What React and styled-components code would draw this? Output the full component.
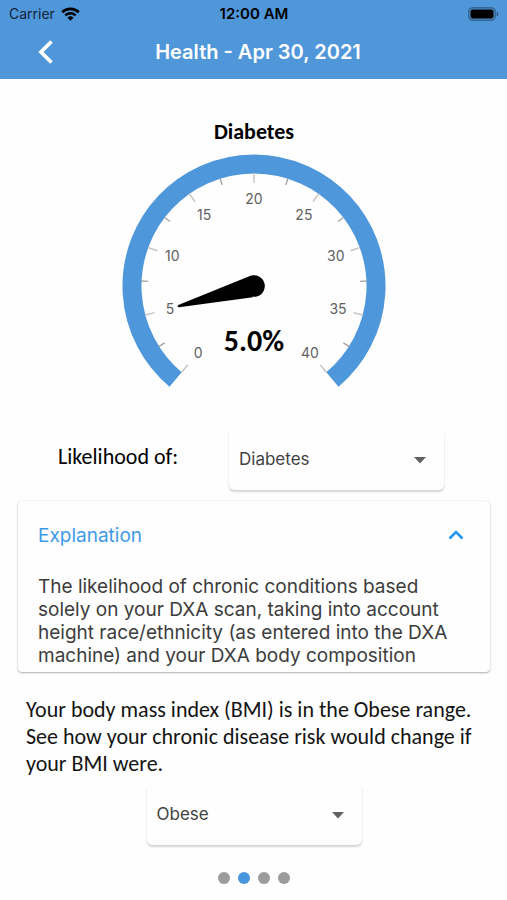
import { useState } from "react";
import styled, { createGlobalStyle } from "styled-components";

const GlobalStyle = createGlobalStyle`
	* {
		box-sizing: border-box;
	}

	body {
		margin: 0;
		background-color: #fefefe;
		font-family: Inter, "Liberation Sans", sans-serif;
		color: #000;
	}
`;

const humanist = `Carlito, Lato, "Open Sans", sans-serif`;

const Container = styled.div`
	display: flex;
	flex-direction: column;
	min-height: 100vh;
`;

const Header = styled.header`
	background-color: #5097da;
`;

const StatusBar = styled.div`
	display: grid;
	grid-template-columns: 1fr auto 1fr;
	align-items: center;
	height: 27px;
	padding: 0 8px 0 9px;
	font-size: 14px;
`;

const Carrier = styled.div`
	display: flex;
	align-items: center;
	gap: 6px;
	color: #10243a;
`;

const Time = styled.div`
	font-size: 15px;
	font-weight: 600;
`;

const Battery = styled.svg`
	justify-self: end;
`;

const NavBar = styled.div`
	display: grid;
	grid-template-columns: 1fr auto 1fr;
	align-items: center;
	height: 52px;
	padding: 0 0 2px 9px;
`;

const BackButton = styled.button`
	display: flex;
	justify-self: start;
	margin-left: 24px;
	padding: 4px;
	border: none;
	background: none;
	cursor: pointer;
`;

const PageTitle = styled.h1`
	margin: 0;
	font-size: 20px;
	font-weight: 600;
	color: white;
`;

const Main = styled.main`
	display: flex;
	flex-direction: column;
	padding: 40px 17px 16px 18px;
`;

const GaugeTitle = styled.h2`
	margin: 0 0 9px;
	font-family: ${humanist};
	font-size: 22px;
	line-height: 26px;
	font-weight: 700;
	text-align: center;
`;

const GaugeChart = styled.svg`
	display: block;
	align-self: center;
`;

const GaugeLabel = styled.text`
	font-size: 14px;
	fill: #616161;
	text-anchor: middle;
`;

const GaugeValue = styled.text`
	font-family: ${humanist};
	font-size: 30px;
	font-weight: 700;
	text-anchor: middle;
`;

const LikelihoodRow = styled.div`
	display: flex;
	justify-content: space-between;
	align-items: flex-start;
	margin-top: 32px;
	padding: 0 46px 0 40px;
`;

const LikelihoodLabel = styled.label`
	padding-top: 12px;
	font-family: ${humanist};
	font-size: 22px;
	line-height: 26px;
`;

const SelectWrapper = styled.div`
	position: relative;
	width: 215px;
`;

const Select = styled.select`
	appearance: none;
	display: block;
	width: 100%;
	height: 58px;
	padding: 0 48px 4px 10px;
	border: none;
	border-radius: 0 0 5px 5px;
	background-color: #fefefe;
	box-shadow: 0 2px 2px rgba(0, 0, 0, 0.16), 0 0 1px rgba(0, 0, 0, 0.14);
	font-family: inherit;
	font-size: 17px;
	color: #424242;
`;

const SelectArrow = styled.svg`
	position: absolute;
	top: 25px;
	right: 18px;
	pointer-events: none;
`;

const Card = styled.section`
	margin-top: 11px;
	padding: 0 20px 5px;
	border-radius: 4px;
	background-color: #fefefe;
	box-shadow: 0 1px 2px rgba(0, 0, 0, 0.3), 0 0 1px rgba(0, 0, 0, 0.2);
`;

const CardHeader = styled.button`
	display: flex;
	justify-content: space-between;
	align-items: center;
	width: 100%;
	height: 68px;
	padding: 0 6px 0 0;
	border: none;
	background: none;
	font-family: inherit;
	font-size: 19px;
	color: #3d9ae8;
	cursor: pointer;
`;

const CardText = styled.p`
	margin: 6px 0 0;
	font-size: 19px;
	line-height: 23px;
	color: #3c3c3c;
`;

const Summary = styled.p`
	margin: 24px 0 10px;
	padding: 0 8px;
	font-family: ${humanist};
	font-size: 22px;
	line-height: 27px;
	color: #141414;
`;

const BmiPicker = styled.div`
	display: flex;
	justify-content: center;
`;

const Dots = styled.nav`
	display: flex;
	justify-content: center;
	gap: 8px;
	margin-top: 27px;
`;

const Dot = styled.button`
	width: 12px;
	height: 12px;
	padding: 0;
	border: none;
	border-radius: 50%;
	background-color: ${(props) => (props.$active ? "#4795dd" : "#9b9b9b")};
	cursor: pointer;
`;

const conditions = ["Diabetes", "Hypertension", "Heart Disease"];
const bmiRanges = ["Normal", "Overweight", "Obese"];
const pages = [0, 1, 2, 3];

const MAX = 40;
const START = 130;
const SWEEP = 280;
const CENTER = 132;

const angleOf = (value) => START + (value / MAX) * SWEEP;

const pointAt = (value, radius) => {
	const rad = (angleOf(value) * Math.PI) / 180;
	return [CENTER + radius * Math.cos(rad), CENTER + radius * Math.sin(rad)];
};

const Gauge = ({ value }) => {
	const ticks = Array.from({ length: 17 }, (_, i) => i * 2.5);
	const labels = ticks.filter((tick) => tick % 5 === 0);
	const [x1, y1] = pointAt(0, 122);
	const [x2, y2] = pointAt(MAX, 122);

	return (
		<GaugeChart width="264" height="246" viewBox="0 0 264 246">
			<path
				d={`M${x1} ${y1} A122 122 0 1 1 ${x2} ${y2}`}
				fill="none"
				stroke="#4e97da"
				strokeWidth="19"
			/>
			{ticks.map((tick) => {
				const major = tick % 5 === 0;
				const [ax, ay] = pointAt(tick, 113);
				const [bx, by] = pointAt(tick, major ? 103 : 106);
				return (
					<line
						key={tick}
						x1={ax}
						y1={ay}
						x2={bx}
						y2={by}
						stroke={major ? "#c2c2c2" : "#a4a4a4"}
						strokeWidth="1.4"
					/>
				);
			})}
			{labels.map((label) => {
				const [x, y] = pointAt(label, 87);
				return (
					<GaugeLabel key={label} x={x} y={y + 5}>
						{label}
					</GaugeLabel>
				);
			})}
			<g transform={`translate(${CENTER} ${CENTER}) rotate(${angleOf(value)})`}>
				<path d="M4 -10.5 L78 -1.2 Q80 0 78 1.2 L4 10.5 Z" />
				<circle r="10.8" />
			</g>
			<GaugeValue x={CENTER} y="197">
				{`${value.toFixed(1)}%`}
			</GaugeValue>
		</GaugeChart>
	);
};

const Dropdown = ({ id, label, options, value, onChange }) => (
	<SelectWrapper>
		<Select
			id={id}
			aria-label={label}
			value={value}
			onChange={(e) => onChange(e.target.value)}
		>
			{options.map((option) => (
				<option key={option}>{option}</option>
			))}
		</Select>
		<SelectArrow width="12" height="7" viewBox="0 0 12 7">
			<path d="M0 0 H12 L6 6.5 Z" fill="#616161" />
		</SelectArrow>
	</SelectWrapper>
);

const App = () => {
	const [condition, setCondition] = useState("Diabetes");
	const [bmi, setBmi] = useState("Obese");
	const [open, setOpen] = useState(true);
	const [page, setPage] = useState(1);

	return (
		<Container>
			<GlobalStyle />
			<Header>
				<StatusBar>
					<Carrier>
						Carrier
						<svg width="19" height="14" viewBox="0 0 19 14">
							<path
								d="M1.2 5.2 A12 12 0 0 1 17.8 5.2"
								fill="none"
								stroke="#000"
								strokeWidth="2.8"
							/>
							<path
								d="M4.3 8.4 A7.6 7.6 0 0 1 14.7 8.4"
								fill="none"
								stroke="#000"
								strokeWidth="2.5"
							/>
							<path d="M9.5 13.8 L6.5 10.7 A4.3 4.3 0 0 1 12.5 10.7 Z" />
						</svg>
					</Carrier>
					<Time>12:00 AM</Time>
					<Battery width="31" height="14" viewBox="0 0 31 14">
						<rect
							x="0.8"
							y="0.8"
							width="26.4"
							height="12.4"
							rx="3.6"
							fill="none"
							stroke="#2f587f"
							strokeWidth="1.2"
						/>
						<rect x="2.5" y="2.5" width="23" height="9" rx="2" />
						<path d="M28.6 4.6 Q30.4 5.4 30.4 7 Q30.4 8.6 28.6 9.4 Z" fill="#2f587f" />
					</Battery>
				</StatusBar>
				<NavBar>
					<BackButton aria-label="Back">
						<svg width="18" height="24" viewBox="0 0 18 24">
							<path
								d="M14.5 1.5 L4 12 L14.5 22.5"
								fill="none"
								stroke="#fff"
								strokeWidth="3.8"
							/>
						</svg>
					</BackButton>
					<PageTitle>Health - Apr 30, 2021</PageTitle>
				</NavBar>
			</Header>

			<Main>
				<GaugeTitle>{condition}</GaugeTitle>
				<Gauge value={5} />

				<LikelihoodRow>
					<LikelihoodLabel htmlFor="condition">Likelihood of:</LikelihoodLabel>
					<Dropdown
						id="condition"
						options={conditions}
						value={condition}
						onChange={setCondition}
					/>
				</LikelihoodRow>

				<Card>
					<CardHeader aria-expanded={open} onClick={() => setOpen(!open)}>
						Explanation
						<svg width="16" height="10" viewBox="0 0 16 10">
							<path
								d={open ? "M1.5 8.5 L8 2 L14.5 8.5" : "M1.5 1.5 L8 8 L14.5 1.5"}
								fill="none"
								stroke="#2196f3"
								strokeWidth="2.6"
							/>
						</svg>
					</CardHeader>
					{open && (
						<CardText>
							The likelihood of chronic conditions based solely on your DXA
							scan, taking into account height race/ethnicity (as entered into
							the DXA machine) and your DXA body composition
						</CardText>
					)}
				</Card>

				<Summary>
					{`Your body mass index (BMI) is in the ${bmi} range. See how your chronic disease risk would change if your BMI were.`}
				</Summary>

				<BmiPicker>
					<Dropdown
						id="bmi"
						label="BMI range"
						options={bmiRanges}
						value={bmi}
						onChange={setBmi}
					/>
				</BmiPicker>

				<Dots aria-label="Pages">
					{pages.map((item) => (
						<Dot
							key={item}
							$active={item === page}
							aria-label={`Page ${item + 1}`}
							onClick={() => setPage(item)}
						/>
					))}
				</Dots>
			</Main>
		</Container>
	);
};

export default App;
